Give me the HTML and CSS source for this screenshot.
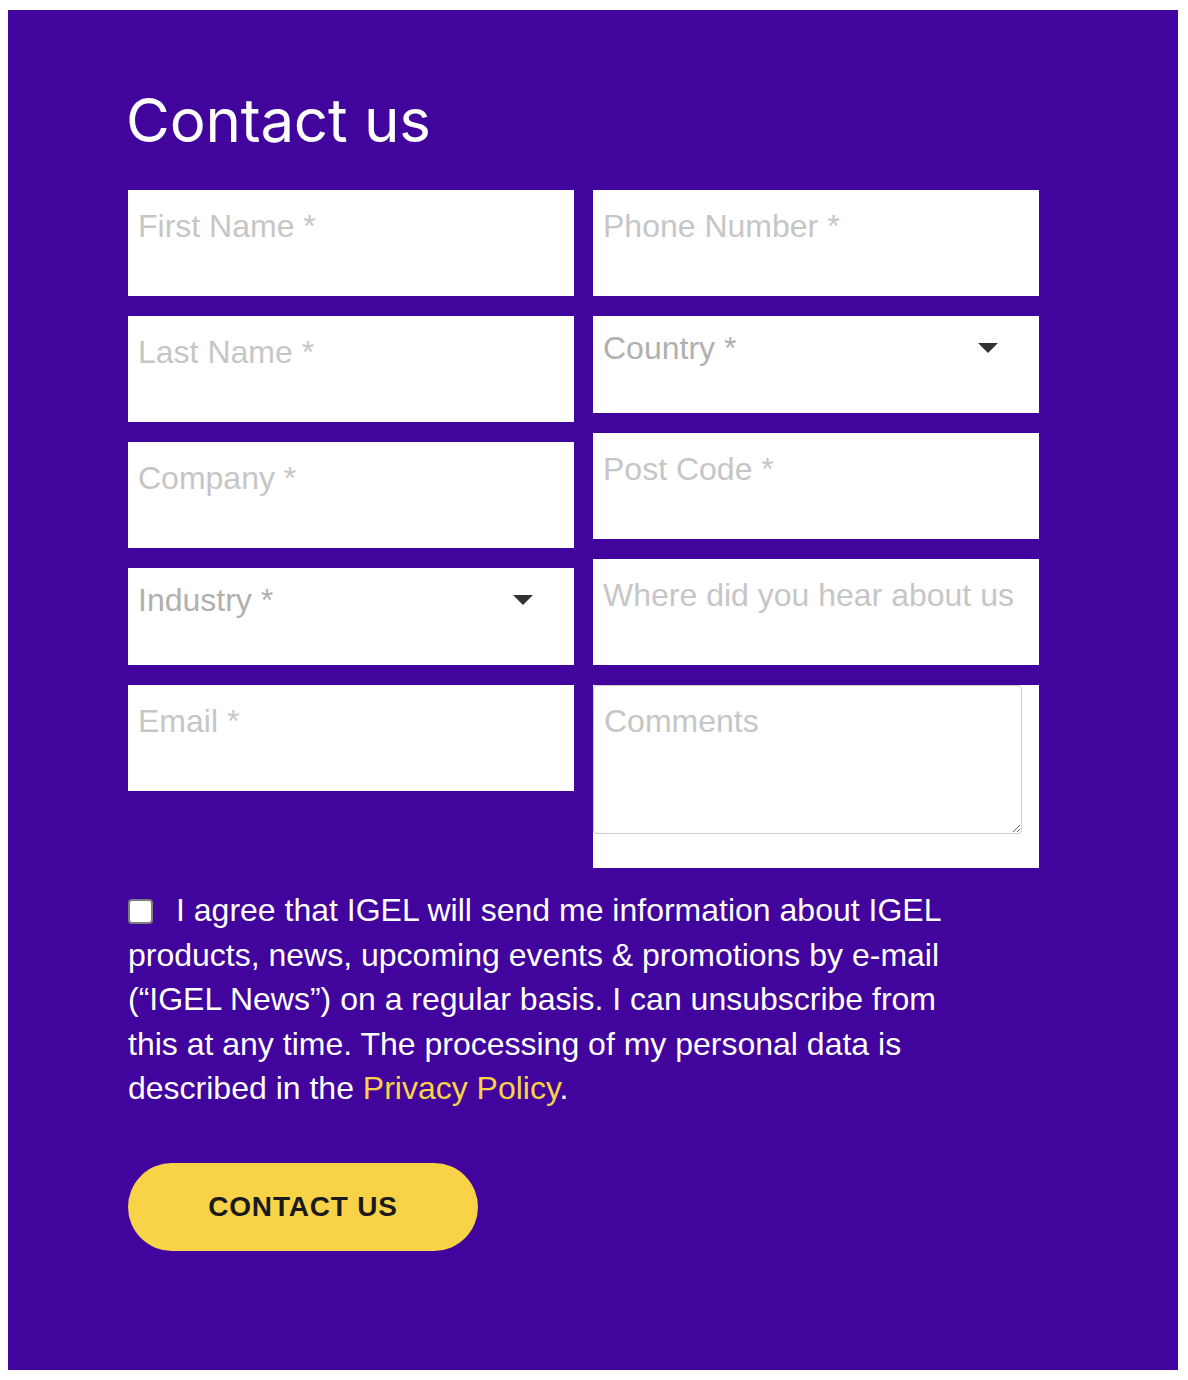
FILE: index.html
```html
<!DOCTYPE html>
<html lang="en">
<head>
<meta charset="utf-8">
<title>Contact us</title>
<link rel="stylesheet" href="styles.css">
</head>
<body>
<section class="contact">
  <h1 class="contact__title">Contact us</h1>
  <form class="contact__form">
    <div class="contact__grid">
      <div class="contact__col">
        <input class="field" type="text" placeholder="First Name *">
        <input class="field" type="text" placeholder="Last Name *">
        <input class="field" type="text" placeholder="Company *">
        <div class="select-wrap">
          <select class="select">
            <option>Industry *</option>
          </select>
          <svg class="select-arrow" width="20" height="10" viewBox="0 0 20 10"><path d="M0 0 H20 L10 10 Z" fill="#333"/></svg>
        </div>
        <input class="field" type="email" placeholder="Email *">
      </div>
      <div class="contact__col">
        <input class="field" type="tel" placeholder="Phone Number *">
        <div class="select-wrap">
          <select class="select">
            <option>Country *</option>
          </select>
          <svg class="select-arrow" width="20" height="10" viewBox="0 0 20 10"><path d="M0 0 H20 L10 10 Z" fill="#333"/></svg>
        </div>
        <input class="field" type="text" placeholder="Post Code *">
        <input class="field" type="text" placeholder="Where did you hear about us">
        <div class="comments">
          <textarea class="comments__area" placeholder="Comments"></textarea>
        </div>
      </div>
    </div>
    <p class="consent">
      <input class="consent__box" type="checkbox">I agree that IGEL will send me information about IGEL products, news, upcoming events &amp; promotions by e-mail (“IGEL News”) on a regular basis. I can unsubscribe from this at any time. The processing of my personal data is described in the <a class="consent__link" href="#">Privacy Policy</a>.
    </p>
    <button class="submit" type="button">CONTACT US</button>
  </form>
</section>
</body>
</html>
```

FILE: styles.css
```css
html, body {
  background: #ffffff;
}
body {
  margin: 10px 8px;
}
.contact {
  width: 1170px;
  height: 1360px;
  box-sizing: border-box;
  background: #41049d;
  padding: 74px 120px 0 120px;
}
.contact__title {
  margin: 0 0 34px -2px;
  font-family: Inter, "Noto Sans", sans-serif;
  font-weight: 400;
  font-size: 60px;
  line-height: 72px;
  color: #ffffff;
  letter-spacing: -0.2px;
}
.contact__form {
  margin: 0;
}
.contact__grid {
  display: grid;
  grid-template-columns: 446px 446px;
  column-gap: 19px;
  align-items: start;
}
.contact__col {
  display: flex;
  flex-direction: column;
  gap: 20px;
}
.field,
.select,
.comments__area {
  font-family: "Liberation Sans", Arial, sans-serif;
  font-size: 32px;
  line-height: 36px;
}
.field {
  display: block;
  box-sizing: border-box;
  width: 446px;
  height: 106px;
  margin: 0;
  border: 0;
  border-radius: 0;
  background: #ffffff;
  padding: 18px 10px 52px 10px;
  color: #333;
  outline: none;
}
.field::placeholder,
.comments__area::placeholder {
  color: #c6c6c6;
  opacity: 1;
}
.select-wrap {
  position: relative;
  width: 446px;
  height: 97px;
}
.select {
  display: block;
  box-sizing: border-box;
  width: 446px;
  height: 97px;
  margin: 0;
  border: 0;
  border-radius: 0;
  background: #ffffff;
  padding: 14px 60px 47px 10px;
  color: #b0b0b0;
  appearance: none;
  -webkit-appearance: none;
  outline: none;
}
.select-arrow {
  position: absolute;
  right: 41px;
  top: 27px;
  pointer-events: none;
}
.comments {
  width: 446px;
  height: 183px;
  background: #ffffff;
}
.comments__area {
  display: block;
  box-sizing: border-box;
  width: 429px;
  height: 149px;
  margin: 0;
  padding: 17px 10px;
  border: 1px solid #cccccc;
  border-radius: 4px;
  background: #ffffff;
  color: #333;
  outline: none;
}
.consent {
  margin: 20px 0 0 0;
  max-width: 840px;
  font-family: "Liberation Sans", Arial, sans-serif;
  font-size: 32px;
  line-height: 44.5px;
  color: #ffffff;
}
.consent__box {
  appearance: none;
  -webkit-appearance: none;
  box-sizing: border-box;
  width: 25px;
  height: 25px;
  margin: 0 23px 0 0;
  border: 2px solid #7d7d7d;
  border-radius: 4px;
  background: #ffffff;
  vertical-align: -3px;
}
.consent__link {
  color: #f8d347;
  text-decoration: none;
}
.submit {
  display: block;
  margin: 52px 0 0 0;
  width: 350px;
  height: 88px;
  border: 0;
  border-radius: 44px;
  background: #f8d347;
  color: #1a1a1a;
  font-family: "Liberation Sans", Arial, sans-serif;
  font-weight: 700;
  font-size: 28px;
  letter-spacing: 0.8px;
  padding: 0;
  cursor: pointer;
}
```
